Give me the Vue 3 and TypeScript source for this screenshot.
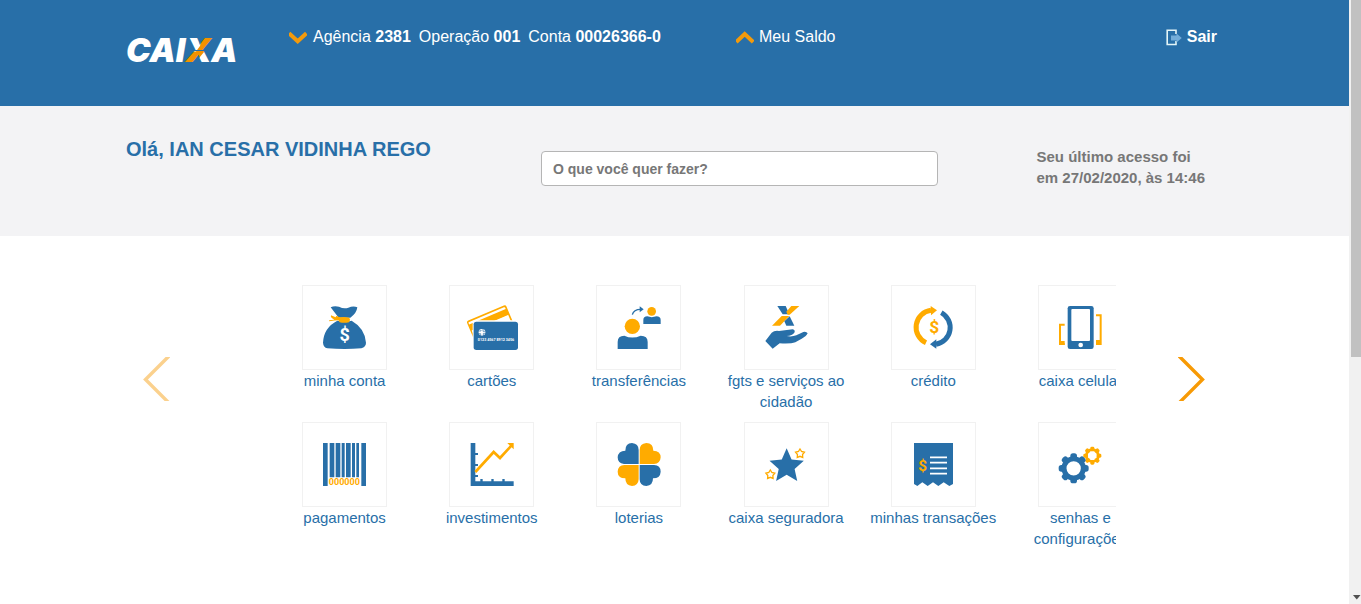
<script setup lang="ts">
import { ref } from 'vue'

interface Service {
  icon: string
  label: string
  box: string
}

const query = ref('')

const services: Service[] = [
  { icon: 'bag', label: 'minha conta', box: '24 18 249 249' },
  { icon: 'cards', label: 'cartões', box: '466 18 249 249' },
  { icon: 'transfer', label: 'transferências', box: '37 18 249 249' },
  { icon: 'hand', label: 'fgts e serviços ao cidadão', box: '480 18 249 249' },
  { icon: 'credit', label: 'crédito', box: '36 18 249 249' },
  { icon: 'phone', label: 'caixa celular', box: '477 18 249 249' },
  { icon: 'barcode', label: 'pagamentos', box: '24 24 249 249' },
  { icon: 'chart', label: 'investimentos', box: '466 24 249 249' },
  { icon: 'clover', label: 'loterias', box: '37 24 249 249' },
  { icon: 'stars', label: 'caixa seguradora', box: '480 24 249 249' },
  { icon: 'receipt', label: 'minhas transações', box: '81 24 249 249' },
  { icon: 'gears', label: 'senhas e configurações', box: '522 24 249 249' },
]

const teeth = [0, 45, 90, 135, 180, 225, 270, 315]

function star(cx: number, cy: number, outer: number, inner: number): string {
  const points: string[] = []
  for (let i = 0; i < 10; i++) {
    const r = i % 2 ? inner : outer
    const a = (Math.PI * i) / 5 - Math.PI / 2
    points.push(`${(cx + r * Math.cos(a)).toFixed(1)},${(cy + r * Math.sin(a)).toFixed(1)}`)
  }
  return points.join(' ')
}
</script>

<template>
  <div class="page">
    <div class="content">
      <header class="top">
        <div class="container top-row">
          <a href="#" class="logo" aria-label="CAIXA">
            <svg width="130" height="44" viewBox="0 0 130 44">
              <defs>
                <pattern id="logo-x" patternUnits="userSpaceOnUse" x="0" y="0" width="130" height="44">
                  <rect width="130" height="44" fill="#fff" />
                  <path d="M50 36 L60 24.500 H70 L74 19 L76 10 H100 V14 L86 23.500 L78 25 L69 36Z" fill="#f39200" />
                  <path d="M66 23.500H90" stroke="#286fa8" stroke-width="1" />
                </pattern>
              </defs>
              <text x="0" y="35" class="logo-text">CAI<tspan fill="url(#logo-x)">X</tspan>A</text>
            </svg>
          </a>
          <button type="button" class="plain account">
            <svg width="18" height="13" viewBox="0 0 18 13"><path d="M0 2.300 8.700 10.300 17.400 2.300" fill="none" stroke="#f39a0c" stroke-width="4" /></svg>
            <span>Agência <b>2381</b></span>
            <span>Operação <b>001</b></span>
            <span>Conta <b>00026366-0</b></span>
          </button>
          <button type="button" class="plain balance">
            <svg width="18" height="13" viewBox="0 0 18 13"><path d="M.2 11 8.700 3 17.200 11" fill="none" stroke="#f39a0c" stroke-width="4" /></svg>
            <span>Meu Saldo</span>
          </button>
          <a href="#" class="exit">
            <svg width="16" height="17" viewBox="0 0 16 17">
              <path d="M10 5V1.200H1.200V15.500H10V12" fill="none" stroke="#e4f5f7" stroke-width="1.600" />
              <path d="M5 6.500H10.500V4.500L15.800 9 10.500 13.500V11.500H5Z" fill="#73add9" />
            </svg>
            <span>Sair</span>
          </a>
        </div>
      </header>

      <section class="welcome">
        <div class="container welcome-row">
          <h1>Olá, IAN CESAR VIDINHA REGO</h1>
          <input v-model="query" type="text" class="search" aria-label="O que você quer fazer?" placeholder="O que você quer fazer?">
          <p class="last">Seu último acesso foi<br>em 27/02/2020, às 14:46</p>
        </div>
      </section>

      <main class="container carousel">
        <button type="button" class="plain arrow faded" aria-label="Anterior">
          <svg width="27" height="44" viewBox="0 0 27 44"><path d="M27-2 2.500 22.500 27 47" fill="none" stroke="#f79a05" stroke-width="3.400" /></svg>
        </button>
        <nav class="window" aria-label="Serviços">
          <ul class="services">
            <li v-for="s in services" :key="s.icon">
              <a href="#">
                <span class="tile">
                  <svg :viewBox="s.box" aria-hidden="true">
                    <g v-if="s.icon === 'bag'">
                      <path class="b" d="M107 82Q118 76 132 80Q147 88 160 83Q175 77 187 82Q185 100 166 113H131Z" />
                      <path class="b" d="M127 122Q150 128 170 122Q210 145 213 188Q213 201 199 205Q149 209 97 205Q85 202 84 188Q86 143 127 122Z" />
                      <path d="M102 121L118 119Q105 113 108 106L122 112Q123 105 130 110L136 112Q149 110 163 113Q168 120 162 127Q148 130 134 127L130 121Q119 121 103 124Z" class="o" />
                      <text x="149" y="184" font-size="54" class="sym w">$</text>
                    </g>
                    <g v-else-if="s.icon === 'cards'">
                      <g transform="translate(1 5) rotate(-23 515 121)">
                        <path class="o" fill-rule="evenodd" d="M521 119H637Q643 119 643 125V185H515V125Q515 119 521 119ZM519 126V131H638V126Q638 124 635 124H522Q519 124 519 126ZM519 149V181H638V149Z" />
                        <path class="o" d="M517 134H641V150H517Z" />
                      </g>
                      <rect x="534" y="121" width="140" height="94" rx="10" fill="#fff" />
                      <rect class="b" x="537" y="125" width="133" height="85" rx="8" />
                      <circle cx="562" cy="157" r="10" fill="#fff" />
                      <path d="M552 153H559V150M552 161H558V167M565 147V154H572M566 168V160H573" fill="none" stroke="#286fa8" stroke-width="2" />
                      <text x="604" y="183" font-size="11" class="sym w">0123 4567 8912 3456</text>
                    </g>
                    <g v-else-if="s.icon === 'transfer'">
                      <circle class="o" cx="143" cy="139" r="23" />
                      <path class="b" d="M99 207V186Q99 167 119 167Q143 178 168 167Q189 167 189 186V207Z" />
                      <circle class="o" cx="201" cy="94" r="13" />
                      <path class="b" d="M176 132V120Q176 109 188 109Q201 114 215 109Q228 109 228 120V132Z" />
                      <path d="M143 104Q147 88 168 88" fill="none" stroke="#286fa8" stroke-width="4" />
                      <path class="b" d="M165 79 177 88 165 97Z" />
                    </g>
                    <g v-else-if="s.icon === 'hand'">
                      <path class="b" d="M577 78H602L613 103H593Z" />
                      <path class="o" d="M619 78H643L614 104H608L604 95Z" />
                      <path class="o" d="M590 108H613L585 137H561Z" />
                      <path class="b" d="M614 109 628 137H604L598 124Z" />
                      <path class="b" d="M541 183 560 158Q568 151 582 153L623 148Q632 151 628 158Q622 167 605 168Q620 171 634 166L655 156Q664 154 668 160Q665 168 650 176L631 187Q617 192 584 190L563 206Z" />
                    </g>
                    <g v-else-if="s.icon === 'credit'">
                      <path d="M138 188A51 51 0 0 1 153 91" fill="none" stroke="#ffab00" stroke-width="15" />
                      <path class="o" d="M152 78 171 91 153 106Z" />
                      <path d="M184 98A51 51 0 0 1 168 193" fill="none" stroke="#286fa8" stroke-width="15" />
                      <path class="b" d="M169 178V206L150 193Z" />
                      <text x="163" y="160" font-size="52" class="sym o">$</text>
                    </g>
                    <g v-else-if="s.icon === 'phone'">
                      <path d="M554 134H540V192H554" fill="none" stroke="#ffab00" stroke-width="6" />
                      <path class="o" d="M541 183H554V195H541Z" />
                      <path d="M648 106H662V192H648" fill="none" stroke="#ffab00" stroke-width="6" />
                      <path class="o" d="M648 180H663V195H648Z" />
                      <rect class="b" x="563" y="78" width="78" height="129" rx="7" />
                      <rect x="574" y="87" width="56" height="96" rx="3" fill="#fff" />
                      <circle cx="602" cy="195" r="7" fill="#fff" />
                    </g>
                    <g v-else-if="s.icon === 'barcode'">
                      <path class="b" d="M84 84H98V213H84ZM199 84H213V213H199ZM104 84H118V187H104ZM122 84H136V187H122ZM140 84H149V187H140ZM153 84H167V187H153ZM171 84H180V187H171ZM184 84H192V187H184Z" />
                      <text x="148" y="211" font-size="27" class="sym o">000000</text>
                    </g>
                    <g v-else-if="s.icon === 'chart'">
                      <path class="b" d="M528 84H542V114H550V120H542V147H550V153H542V180H550V186H542V199H557V192H564V199H590V192H597V199H623V192H630V199H657V213H528Z" />
                      <path d="M542 171 597 111 616 129 650 92" fill="none" stroke="#ffab00" stroke-width="8" />
                      <path class="o" d="M638 84H657V103Z" />
                    </g>
                    <g v-else-if="s.icon === 'clover'">
                      <path class="b" d="M162 147H118Q99 145 99 127Q100 108 122 107Q122 84 142 84Q162 86 162 105Z" />
                      <path class="o" d="M165 147V105Q165 86 185 84Q206 85 206 107Q228 108 228 127Q227 146 208 147Z" />
                      <path class="o" d="M162 150V193Q161 212 142 213Q122 212 122 190Q99 189 99 170Q100 151 119 150Z" />
                      <path class="b" d="M165 150H208Q228 151 228 170Q227 190 205 190Q205 212 185 213Q165 212 165 193Z" />
                    </g>
                    <g v-else-if="s.icon === 'stars'">
                      <polygon class="b" :points="star(605, 154, 54, 25)" />
                      <polygon :points="star(645, 116, 14, 8)" fill="#fff" stroke="#ffab00" stroke-width="4" />
                      <polygon :points="star(556, 179, 14, 8)" fill="#fff" stroke="#ffab00" stroke-width="4" />
                    </g>
                    <g v-else-if="s.icon === 'receipt'">
                      <path class="b" d="M147 84H264V207L253 213 236 202 220 213 204 202 188 213 172 202 157 213 147 207Z" />
                      <path d="M195 127H246M195 143H246M195 160H246M195 176H246" stroke="#fff" stroke-width="5" />
                      <text x="173" y="167" font-size="46" class="sym o">$</text>
                    </g>
                    <g v-else>
                      <rect v-for="t in teeth" :key="t" class="o" x="676" y="95" width="12" height="14" rx="4" :transform="`rotate(${t} 682 122)`" />
                      <circle cx="682" cy="122" r="18" fill="none" stroke="#ffab00" stroke-width="8" />
                      <circle cx="626" cy="160" r="40" fill="#fff" />
                      <rect v-for="t in teeth" :key="t + 1" class="b" x="616" y="115" width="20" height="20" rx="8" :transform="`rotate(${t} 626 160)`" />
                      <circle cx="626" cy="160" r="29" fill="none" stroke="#286fa8" stroke-width="15" />
                    </g>
                  </svg>
                </span>
                <span class="label">{{ s.label }}</span>
              </a>
            </li>
          </ul>
        </nav>
        <button type="button" class="plain arrow" aria-label="Próximo">
          <svg width="27" height="44" viewBox="0 0 27 44"><path d="M0-2 24.500 22.500 0 47" fill="none" stroke="#f79a05" stroke-width="3.400" /></svg>
        </button>
      </main>
    </div>
    <div class="scroll" aria-hidden="true">
      <div class="thumb"></div>
      <svg width="8" height="5" viewBox="0 0 8 5"><path d="M0 0H7.500L3.800 4.500Z" fill="#505050" /></svg>
    </div>
  </div>
</template>

<style>
body {
  margin: 0;
  background: #fff;
}
</style>

<style scoped>
.page {
  display: flex;
  min-height: 100vh;
  font-family: "Liberation Sans", Arial, sans-serif;
  color: #286fa8;
}
.content {
  flex: 1;
  min-width: 0;
}
.container {
  box-sizing: border-box;
  max-width: 1097px;
  margin: 0 auto;
}
.plain {
  padding: 0;
  border: 0;
  background: none;
  font: inherit;
  color: inherit;
  cursor: pointer;
}
.top {
  min-height: 106px;
  background: #286fa8;
  color: #fff;
  font-size: 16px;
  line-height: 20px;
}
.top-row {
  display: grid;
  grid-template-columns: 163px 447px 1fr auto;
  align-items: start;
  padding: 27px 6px 0 0;
}
.logo svg {
  display: block;
}
.logo-text {
  font-family: Inter, "Open Sans", sans-serif;
  font-size: 33px;
  font-weight: 900;
  font-style: italic;
  fill: #fff;
}
.account,
.balance,
.exit {
  display: flex;
  align-items: center;
  gap: 8px;
  white-space: nowrap;
}
.account svg {
  margin-right: -2px;
}
.balance,
.exit {
  gap: 5px;
}
.exit {
  color: #fff;
  font-weight: bold;
  text-decoration: none;
}
.welcome {
  min-height: 130px;
  background: #f3f3f5;
}
.welcome-row {
  display: grid;
  grid-template-columns: 415px 397px auto;
  align-items: start;
  padding: 31px 18px 0 0;
}
h1 {
  margin: 0;
  font-size: 20px;
  line-height: 24px;
}
.search {
  box-sizing: border-box;
  width: 100%;
  height: 35px;
  margin-top: 14px;
  padding: 0 11px;
  border: 1px solid #b5b5b5;
  border-radius: 4px;
  background: #fff;
  color: #777;
  font: bold 14px "Liberation Sans", Arial, sans-serif;
}
.search::placeholder {
  color: #777;
  opacity: 1;
}
.last {
  margin: 9px 0 0;
  justify-self: end;
  color: #777;
  font-size: 15px;
  font-weight: bold;
  line-height: 21px;
}
.carousel {
  display: flex;
  align-items: flex-start;
  padding: 49px 18px 0 17px;
}
.arrow {
  flex: none;
  margin-top: 72px;
}
.arrow svg {
  display: block;
}
.faded {
  opacity: 0.45;
}
.window {
  flex: 1;
  min-width: 0;
  margin: 0 62px 0 101px;
  overflow: hidden;
}
.services {
  display: grid;
  grid-template-columns: repeat(6, 1fr);
  row-gap: 10px;
  width: 883px;
  margin: 0;
  padding: 0;
  list-style: none;
}
.services a {
  display: flex;
  flex-direction: column;
  align-items: center;
  color: #286fa8;
  text-decoration: none;
}
.tile {
  box-sizing: border-box;
  width: 85px;
  height: 85px;
  border: 1px solid #f1f1f1;
}
.tile svg {
  display: block;
  width: 100%;
  height: 100%;
}
.label {
  padding: 0 8px;
  font-size: 15px;
  line-height: 21px;
  text-align: center;
}
.b {
  fill: #286fa8;
}
.o {
  fill: #ffab00;
}
.w {
  fill: #fff;
}
.sym {
  font-family: Roboto, "Liberation Sans", sans-serif;
  font-weight: bold;
  text-anchor: middle;
}
.scroll {
  box-sizing: border-box;
  display: flex;
  flex-direction: column;
  justify-content: space-between;
  align-items: flex-end;
  width: 12px;
  height: 100vh;
  padding: 0 0 4px 2px;
  background: #f1f1f1;
}
.thumb {
  width: 100%;
  height: 357px;
  background: #c1c1c1;
}
</style>
